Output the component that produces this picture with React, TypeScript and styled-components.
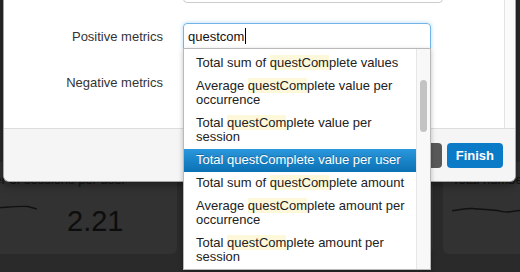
import styled, { createGlobalStyle } from "styled-components";

const GlobalStyle = createGlobalStyle`
  html, body {
    margin: 0;
    padding: 0;
  }
  body {
    background: #2a2a2a;
    font-family: "Liberation Sans", Arial, sans-serif;
    overflow: hidden;
  }
  *, *::before, *::after {
    box-sizing: border-box;
  }
`;

const Page = styled.div`
  position: relative;
  width: 520px;
  height: 272px;
  overflow: hidden;
  background: #2a2a2a;
`;

/* dashboard behind the modal */
const Dashboard = styled.div`
  display: flex;
  gap: 10px;
  margin-left: -99px;
  padding-top: 162px;
`;
const Card = styled.div<{ $wide?: boolean }>`
  flex: 0 0 ${(p) => (p.$wide ? "276px" : "246px")};
  background: #323232;
  border-radius: 6px;
  padding: 10px 9px 16px;
`;
const CardTitle = styled.div`
  font-size: 13px;
  line-height: 16px;
  color: #111;
  white-space: nowrap;
  margin-bottom: 8px;
`;
const CardRow = styled.div`
  display: flex;
  align-items: center;
  gap: 30px;
  height: 42px;
`;
const Value = styled.div`
  font-size: 29px;
  color: #0d0d0d;
  padding-top: 8px;
`;

/* modal */
const Modal = styled.div`
  position: absolute;
  left: 3px;
  top: -38px;
  width: 513px;
  background: #fff;
  border: 1px solid rgba(0, 0, 0, 0.35);
  border-radius: 6px;
  box-shadow: 0 3px 8px rgba(0, 0, 0, 0.4);
  z-index: 5;
`;
const Body = styled.div`
  display: flex;
`;
const Form = styled.div`
  flex: 1;
  padding: 14px 0 33px;
`;
const BodyTrack = styled.div`
  width: 11px;
  border-left: 1px solid #e4e4e4;
  background: #fbfbfb;
`;
const Row = styled.div`
  display: flex;
  align-items: center;
  gap: 20px;
  min-height: 26px;
  margin-bottom: 20px;
  &:last-child {
    margin-bottom: 0;
  }
`;
const Label = styled.div`
  width: 159px;
  text-align: right;
  font-size: 13px;
  color: #333;
`;
const PlainInput = styled.div`
  width: 260px;
  height: 26px;
  border: 1px solid #ccc;
  border-radius: 4px;
`;
const Field = styled.div`
  position: relative;
  width: 248px;
`;
const FieldBox = styled.div`
  height: 26px;
  display: flex;
  align-items: center;
  padding: 0 4px;
  border: 1px solid #72b4e8;
  border-radius: 4px 4px 0 0;
  box-shadow: 0 0 4px rgba(82, 168, 236, 0.45);
  font-size: 13px;
  color: #111;
`;
const Caret = styled.span`
  display: inline-block;
  width: 1px;
  height: 16px;
  margin-left: 1px;
  background: #000;
`;

const Dropdown = styled.div`
  position: absolute;
  top: 25px;
  left: 0;
  right: 0;
  height: 222px;
  display: flex;
  background: #fff;
  border: 1px solid #b9b9b9;
  box-shadow: 0 2px 5px rgba(0, 0, 0, 0.25);
  z-index: 10;
`;
const List = styled.ul`
  flex: 1;
  list-style: none;
  margin: 0;
  padding: 3px 0 0;
  overflow: hidden;
`;
const Item = styled.li<{ $active?: boolean }>`
  padding: 4px 4px 5px 12px;
  font-size: 13px;
  line-height: 14px;
  color: ${(p) => (p.$active ? "#fff" : "#222")};
  background: ${(p) =>
    p.$active ? "linear-gradient(#2b97dc, #0a71b4)" : "transparent"};
  text-shadow: ${(p) => (p.$active ? "0 -1px 0 rgba(0,0,0,0.25)" : "none")};
  mark {
    background: ${(p) => (p.$active ? "transparent" : "#fdf8da")};
    color: inherit;
  }
`;
const Track = styled.div`
  width: 14px;
  border-left: 1px solid #e6e6e6;
  background: #f8f8f8;
`;
const Thumb = styled.div`
  width: 7px;
  height: 52px;
  margin: 31px auto 0;
  border-radius: 4px;
  background: #c3c3c3;
`;

const Footer = styled.div`
  display: flex;
  justify-content: flex-end;
  gap: 5px;
  padding: 14px 12px 13px;
  border-top: 1px solid #ddd;
  background: #f5f5f5;
  border-radius: 0 0 6px 6px;
`;
const Button = styled.button<{ $primary?: boolean }>`
  height: 25px;
  padding: ${(p) => (p.$primary ? "0 9px" : "0 16px")};
  border: none;
  border-radius: 4px;
  font-family: "Liberation Sans", Arial, sans-serif;
  font-size: 13px;
  font-weight: bold;
  color: #fff;
  background: ${(p) => (p.$primary ? "#0b7bc8" : "#585858")};
`;

const items = [
  { pre: "Total sum of ", post: "plete values" },
  { pre: "Average ", post: "plete value per occurrence" },
  { pre: "Total ", post: "plete value per session" },
  { pre: "Total ", post: "plete value per user", active: true },
  { pre: "Total sum of ", post: "plete amount" },
  { pre: "Average ", post: "plete amount per occurrence" },
  { pre: "Total ", post: "plete amount per session" },
];

function App() {
  return (
    <Page>
      <GlobalStyle />
      <Dashboard>
        <Card $wide>
          <CardTitle>Average number of sessions per user</CardTitle>
          <CardRow>
            <svg width="127" height="42" viewBox="0 0 127 42">
              <path
                d="M0 14 C20 12 30 10 45 11 S70 13 85 12 S105 10 118 10.5 L127 13"
                fill="none"
                stroke="#111"
                strokeWidth="1.4"
              />
            </svg>
            <Value>2.21</Value>
          </CardRow>
        </Card>
        <Card />
        <Card>
          <CardTitle>Total number of sessions</CardTitle>
          <CardRow>
            <svg width="97" height="42" viewBox="0 0 97 42">
              <path
                d="M-2 15 C8 14 14 12 20 12.5 S30 13 40 14 S50 16 55 16 S65 14 70 14.5 L97 15"
                fill="none"
                stroke="#111"
                strokeWidth="1.4"
              />
            </svg>
            <Value>14.6</Value>
          </CardRow>
        </Card>
      </Dashboard>

      <Modal>
        <Body>
          <Form>
            <Row>
              <Label>Name</Label>
              <PlainInput />
            </Row>
            <Row>
              <Label>Positive metrics</Label>
              <Field>
                <FieldBox>
                  questcom
                  <Caret />
                </FieldBox>
                <Dropdown>
                  <List>
                    {items.map((it, i) => (
                      <Item key={i} $active={it.active}>
                        {it.pre}
                        <mark>questCom</mark>
                        {it.post}
                      </Item>
                    ))}
                  </List>
                  <Track>
                    <Thumb />
                  </Track>
                </Dropdown>
              </Field>
            </Row>
            <Row>
              <Label>Negative metrics</Label>
            </Row>
          </Form>
          <BodyTrack />
        </Body>
        <Footer>
          <Button>Back</Button>
          <Button $primary>Finish</Button>
        </Footer>
      </Modal>
    </Page>
  );
}

export default App;
